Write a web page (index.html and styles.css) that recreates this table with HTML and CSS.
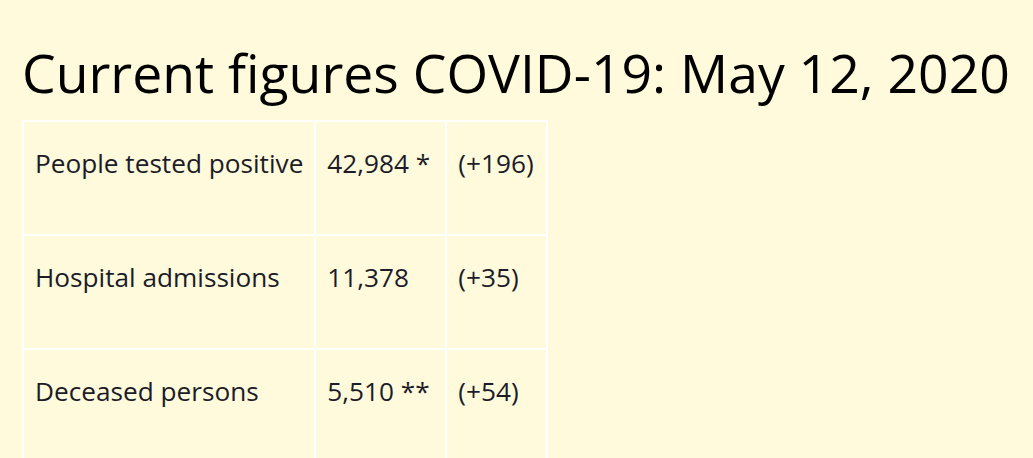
FILE: index.html
```html
<!DOCTYPE html>
<html lang="en">
<head>
<meta charset="utf-8">
<title>Current figures COVID-19</title>
<link rel="stylesheet" href="styles.css">
</head>
<body>
<main class="page">
  <h1 class="title">Current figures COVID-19: May 12, 2020</h1>
  <table class="figures">
    <tbody>
      <tr>
        <td class="label">People tested positive</td>
        <td class="value">42,984 *</td>
        <td class="delta">(+196)</td>
      </tr>
      <tr>
        <td class="label">Hospital admissions</td>
        <td class="value">11,378</td>
        <td class="delta">(+35)</td>
      </tr>
      <tr>
        <td class="label">Deceased persons</td>
        <td class="value">5,510 **</td>
        <td class="delta">(+54)</td>
      </tr>
    </tbody>
  </table>
</main>
</body>
</html>
```

FILE: styles.css
```css
html, body {
  margin: 0;
  padding: 0;
  background: #fffadc;
}

.page {
  padding: 0 0 0 22px;
  font-family: "Open Sans", "Noto Sans", sans-serif;
}

.title {
  margin: 0;
  padding-top: 38px;
  font-size: 53.5px;
  font-weight: 400;
  line-height: 70px;
  color: #000;
  white-space: nowrap;
}

.figures {
  margin-top: 12px;
  border-collapse: collapse;
  border: 2px solid #fff;
  font-size: 26.2px;
  color: #1c1c28;
}

.figures td {
  border: 2px solid #fff;
  padding: 26px 11px 56px;
  vertical-align: top;
  line-height: 30px;
  white-space: nowrap;
}

.label { width: 268px; }
.value { width: 107px; }
.delta { width: 77px; }
```
